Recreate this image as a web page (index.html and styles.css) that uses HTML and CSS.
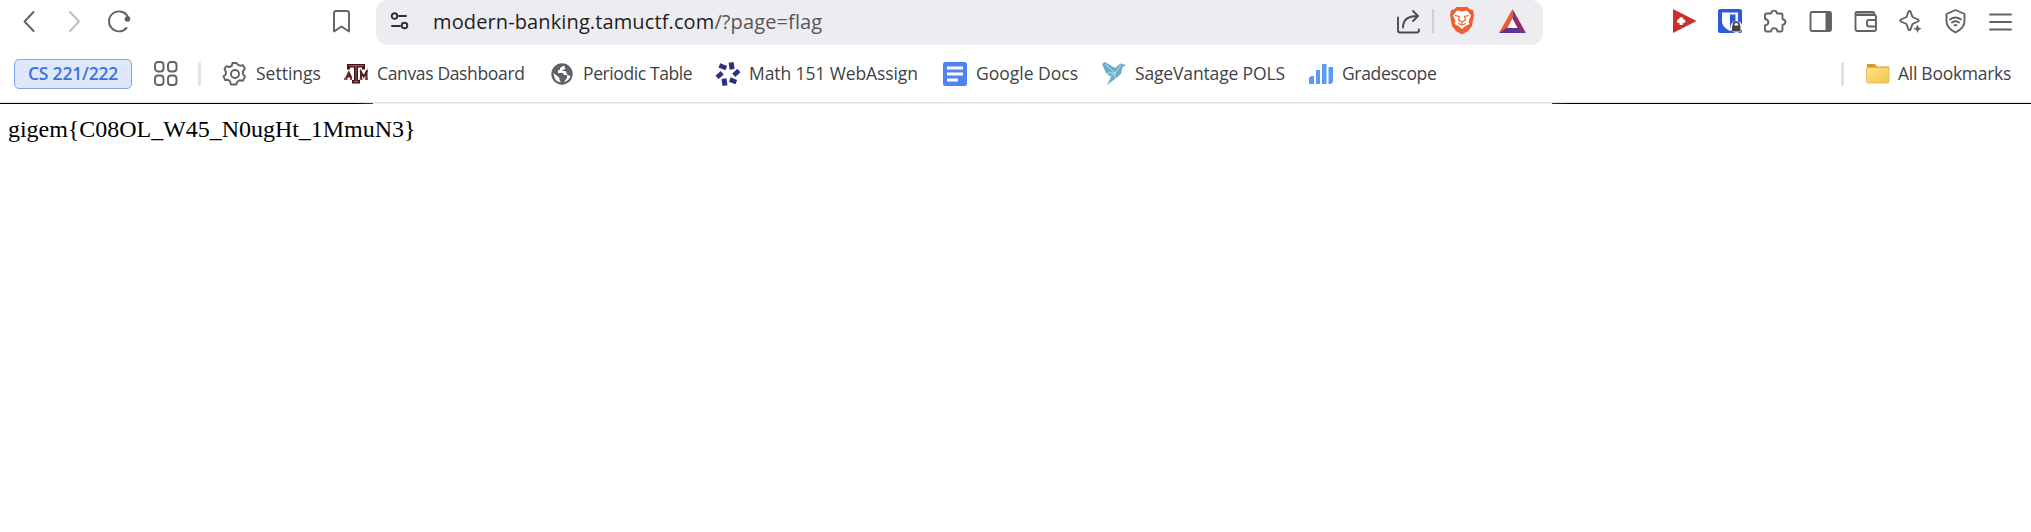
FILE: index.html
```html
<!DOCTYPE html>
<html lang="en">
<head>
<meta charset="utf-8">
<title>modern-banking.tamuctf.com</title>
<link rel="stylesheet" href="styles.css">
</head>
<body>
<header class="browser">
  <div class="toolbar">
    <nav class="nav">
      <svg class="ic back" width="24" height="24" viewBox="0 0 24 24"><path d="M15.500 3 6.500 12.500l9 9.500"/></svg>
      <svg class="ic forward" width="24" height="24" viewBox="0 0 24 24"><path d="M7 3l9 9.500L7 22"/></svg>
      <svg class="ic" width="26" height="26" viewBox="0 0 26 26"><path d="M21 9A10 10 0 1 0 19.500 20"/><circle class="solid" cx="20.500" cy="11" r="2.800"/></svg>
    </nav>
    <svg class="ic save" width="20" height="26" viewBox="0 0 20 26"><path d="M4 3h11a2 2 0 0 1 2 2v18.500L9.500 18.500 2 23.500V5a2 2 0 0 1 2-2z"/></svg>
    <div class="omnibox">
      <svg class="ic tune" width="20" height="20" viewBox="0 0 20 20"><path d="M9 5h7M2 15h8"/><circle cx="4.500" cy="5" r="2.800"/><circle cx="14.500" cy="14.500" r="2.800"/></svg>
      <div class="url"><span class="host">modern-banking.tamuctf.com</span><span class="path">/?page=flag</span></div>
      <svg class="ic share" width="26" height="26" viewBox="0 0 26 26"><path d="M2 8.500v13q0 2 2 2h17q2 0 2-3M7 18.500C7 11 12 7 21.500 7M17 2l5 5-5 5"/></svg>
      <i class="sep"></i>
      <svg class="brave" width="24" height="28" viewBox="0 0 24 28"><path fill="#f1602c" d="M6.500 0h11L20 2.500l3 .5 1 5-2 11-4 5-6 3.500L6 24l-4-5L0 8l1-5 3-.5z"/><path fill="#fff" d="m7 3.500 5 1 5-1 4 5-2.500 5.500 1 3-4 2-3.500 3-3.500-3-4-2 1-3L3 8.500z"/><path fill="none" stroke="#f1602c" stroke-width="1.100" d="m5 8.500 4.500 1-1 3.500 3.500 2 3.500-2-1-3.500 4.500-1M8 16.500l4 1.500 4-1.500M12 15v3"/></svg>
      <svg class="bat" width="27" height="24" viewBox="0 0 27 24"><path fill="#ee5a35" d="M13.500 0 0 24l9-5 4.500-9z"/><path fill="#962b63" d="m13.500 0 13.500 24-9-5-4.500-9z"/><path fill="#63318f" d="M0 24h27l-7.500-5h-12z"/><path fill="#fff" d="m13.500 9.500-5 9.500h10z"/></svg>
    </div>
    <div class="extensions">
      <svg width="25" height="25" viewBox="0 0 25 25"><path fill="#cc2f2a" d="M0 0v24l23.500-12z"/><g fill="#fff"><circle cx="8.200" cy="10" r="2"/><circle cx="6" cy="12.300" r="2"/><circle cx="10.400" cy="12.300" r="2"/><path d="M7.200 11h2l.6 5H6.600z"/></g></svg>
      <svg width="25" height="25" viewBox="0 0 25 25"><rect width="24" height="24" rx="2" fill="#2b5bdb"/><path fill="#fff" d="M4 3.500h16V12c0 5-3 7-8 10-5-3-8-5-8-10z"/><path fill="#2b5bdb" d="M12 5.500h5.500v7q0 3.500-5.500 6.500z"/><circle cx="18.500" cy="18" r="6" fill="#fff"/><path fill="none" stroke="#444" stroke-width="1.700" d="M15.500 18v-2a2.800 2.800 0 0 1 5.600 0v2"/><rect x="14" y="16.500" width="8.500" height="6" rx=".8" fill="#444"/></svg>
      <svg class="ic" width="25" height="25" viewBox="0 0 25 25"><path d="M3.500 4.500H7.500a1 1 0 0 0 1-1C8.500 1 13.500 1 13.500 3.500a1 1 0 0 0 1 1h3.500q1.500 0 1.500 1.500v4q3 1 3 3t-3 3v5q0 1.500-1.500 1.500H14.500c-.5-4.500-6-4.500-6.500 0H3.500Q2 22.500 2 21v-4.500c4.500-1 4.500-5.500 0-6.500V6q0-1.500 1.500-1.500z"/></svg>
      <svg class="ic" width="25" height="25" viewBox="0 0 25 25"><rect x="1.500" y="3" width="20.500" height="19" rx="1.500"/><path class="solid" d="M16.500 3H22v19h-5.500z"/></svg>
      <svg class="ic" width="25" height="25" viewBox="0 0 25 25"><path class="wash" d="M3 3h17v3H3z"/><path d="M1.500 5v15q0 2 2 2H20q2 0 2-2V8q0-2-2-2H3.500q-2 0-2-1.500T3.500 3h15q2 0 2 3M22 11h-7q-2 0-2 2v2.500q0 2 2 2h7"/></svg>
      <svg class="ic" width="25" height="25" viewBox="0 0 25 25"><path d="M9.500 2.500q1-1 2 0l2 5.500 5.500 2.500q1.500 1 0 2L13.500 15l-2 5.500q-1 1-2 0L7.500 15 2 12.500q-1.500-1 0-2L7.500 8z"/><path class="solid thin" d="m18.500 15.500 1.200 3 3 1.200-3 1.200-1.200 3-1.200-3-3-1.200 3-1.200z"/></svg>
      <svg class="ic" width="25" height="25" viewBox="0 0 25 25"><path d="m11.500 1 9 4v7q0 7-9 11.500Q2.500 19 2.500 12V5zM6 10.500q5.500-4 11 0M8 13.500q3.500-2.500 7 0"/><path d="M10.500 16.300q1-.7 2 0"/></svg>
      <svg class="ic" width="25" height="25" viewBox="0 0 25 25"><path d="M1 5.500h21M1 13h21M1 20.500h21"/></svg>
    </div>
  </div>
  <div class="bookmarks">
    <span class="group">CS 221/222</span>
    <svg class="ic apps" width="26" height="26" viewBox="0 0 26 26"><rect x="2" y="1" width="8.500" height="9.500" rx="3"/><rect x="15" y="1" width="8.500" height="9.500" rx="3"/><rect x="2" y="14.500" width="8.500" height="9.500" rx="3"/><rect x="15" y="14.500" width="8.500" height="9.500" rx="3"/></svg>
    <i class="divider"></i>
    <a class="bm settings"><svg class="ic" width="26" height="26" viewBox="0 0 26 26"><path d="m10.500 2-.8 3-2.500 1-3-.8L2.500 8l1.500 3-.5 3-2 1 1.500 4 3-.3 2 1.500 1 3.300h5l1.500-3 2-1.300 3.500.5 2-4-2-2.500v-3l2-2.500-2-3.500-3 .5-2.500-1.200L14.500 2z"/><circle cx="13" cy="13" r="4"/></svg><span>Settings</span></a>
    <a class="bm canvas"><svg width="24" height="20" viewBox="0 0 24 20"><g fill="none" stroke="#5a1f20" stroke-width="2"><path d="m2 14.500 2.800-6 2.800 6M3 12.500h4M17 14.500V8l2.700 4.500L22.500 8v6.500"/><path stroke-width="1.600" d="M0 15h3.500M6 15h3.500M15 15h3.500M21 15h3M15.500 7.500H18M21.500 7.500H24"/></g><path fill="#fff" d="M8 3h7.500v13H8z"/><path fill="#4a0d10" d="M3 0h18v5.500h-3V3.500h-4V16h2v3.500H8V16h2V3.500H6v2H3z"/><path fill="none" stroke="#b79c9d" stroke-width=".7" d="M4.500 1.700h15M12 2v15.500M9.500 17.700h5"/></svg><span>Canvas Dashboard</span></a>
    <a class="bm periodic"><svg width="22" height="22" viewBox="0 0 22 22"><circle cx="11" cy="11" r="10.700" fill="#5f6368"/><path fill="#fff" d="M13 2.500 9 5v2H7v3h5l1 2h3v3l-3 4q5-1 6.500-6l-3-1-2-4h-3V7l3-1zM2.500 10l6 5v2l1.500 2.500Q3 18.500 2.500 10"/></svg><span>Periodic Table</span></a>
    <a class="bm math"><svg width="25" height="24" viewBox="0 0 25 24"><g fill="#2b3180"><rect x="13" y=".5" width="5" height="7" transform="rotate(-8 15 3)"/><rect x="17" y="8.500" width="7" height="4.600" transform="rotate(-42 20.500 11)"/><rect x="13.500" y="16.500" width="7" height="4.600" transform="rotate(22 17 19)"/><rect x="6" y="16.500" width="5" height="7" transform="rotate(-8 9 20)"/><rect x=".2" y="10.500" width="7" height="4.600" transform="rotate(-42 4 13)"/><rect x="3" y="2.500" width="7.500" height="4.600" transform="rotate(22 7 5)"/></g></svg><span>Math 151 WebAssign</span></a>
    <a class="bm docs"><svg width="24" height="24" viewBox="0 0 24 24"><rect width="24" height="24" rx="2.500" fill="#4f83f1"/><path fill="#fff" d="M4 4.500h16v3H4zM4 10.500h16v3H4zM4 16.500h11v3H4z"/></svg><span>Google Docs</span></a>
    <a class="bm sage"><svg width="24" height="23" viewBox="0 0 24 23"><path fill="#68aecb" d="m0 2 4 9 5 4-4 8 8-6 6-5 1.500-7L24 3l-5.500-1.500L13 6 3 0z"/><path fill="none" stroke="#d6eaf1" stroke-width=".8" d="m3 2 10 9 6-8M5 11l8 0v5M8 15l5-4"/></svg><span>SageVantage POLS</span></a>
    <a class="bm grade"><svg width="24" height="22" viewBox="0 0 24 22"><path fill="#5b9bf8" d="M0 21v-6l2-2h3v8zM7 7h4v14H7zM13 1h4.500v20H13zM19.500 4H24v15l-2 2h-2.500z"/></svg><span>Gradescope</span></a>
    <div class="all"><i class="divider"></i><svg width="24" height="20" viewBox="0 0 24 20"><defs><linearGradient id="f" x2="1" y2="1"><stop stop-color="#ffe28a"/><stop offset="1" stop-color="#f3c44b"/></linearGradient></defs><path fill="#d79b2b" d="M1 0h8l2 2.500h12v10H1z"/><rect x=".5" y="3.500" width="22.500" height="15.500" rx="1.500" fill="url(#f)" stroke="#dfae3c" stroke-width=".7"/></svg><span>All Bookmarks</span></div>
  </div>
  <div class="edge"></div>
</header>
<main class="page">gigem{C08OL_W45_N0ugHt_1MmuN3}</main>
</body>
</html>
```
FILE: styles.css
```css
* { box-sizing: border-box; }
body { margin: 0; background: #fff; font-family: "Open Sans", sans-serif; overflow: hidden; }
svg { display: block; flex: none; overflow: visible; }
.ic { fill: none; stroke: #5f6368; stroke-width: 1.900; stroke-linecap: round; stroke-linejoin: round; }
.ic .solid { fill: #5f6368; stroke: none; }
.ic .wash { fill: #aaadb0; stroke: none; }
.toolbar { display: flex; height: 45px; }
.nav { display: flex; width: 332px; padding: 9px 0 0 18px; gap: 21px; }
.nav .ic:last-child { margin: -1px 0 0 -1px; }
.nav .forward { stroke: #bdbfc2; }
.save { margin-top: 8px; }
.omnibox { display: flex; width: 1167px; height: 45px; margin-left: 24px; background: #edecf1; border-radius: 0 0 12px 12px; padding-left: 14px; border-radius: 12px; }
.tune { margin-top: 11px; stroke: #303136; }
.url { width: 986px; padding-left: 23px; font-size: 20px; line-height: 43px; letter-spacing: .12px; white-space: nowrap; color: #55565b; }
.host { color: #1d1d22; }
.share { margin-top: 9px; stroke: #4a4b50; }
.sep { width: 2px; height: 24px; margin: 9px 16px 0 10px; background: #cfcfd4; }
.brave { margin-top: 7px; }
.bat { margin: 9px 0 0 25px; }
.extensions { display: flex; gap: 20.200px; padding: 9px 0 0 130px; }
.bookmarks { display: flex; align-items: center; height: 57px; font-size: 17.500px; color: #414246; }
.bm, .all { display: flex; align-items: center; height: 30px; white-space: nowrap; }
.bm span, .all span { line-height: 26px; margin-top: -1px; }
.group { width: 118px; height: 30px; margin: 1px 21px 0 14px; border: 1.500px solid #80a5ee; border-radius: 5px; background: #dfe8fb; color: #3d70e2; font-weight: 600; line-height: 26px; letter-spacing: -.2px; text-align: center; }
.divider { width: 3px; height: 24px; border-radius: 2px; background: #e2e2e6; }
.apps { margin: 1px 19px 0 0; }
.settings { width: 122px; margin-left: 21px; gap: 8px; }
.canvas { width: 207px; gap: 9px; letter-spacing: -.35px; }
.periodic { width: 165px; gap: 10px; letter-spacing: -.4px; }
.math { width: 227px; gap: 8px; letter-spacing: -.1px; }
.docs { width: 159px; gap: 9px; }
.sage { width: 207px; gap: 9px; letter-spacing: -.15px; }
.grade { gap: 9px; letter-spacing: -.35px; }
.all { width: 190px; margin-left: auto; letter-spacing: -.27px; }
.all svg { margin: 0 8px 0 22px; }
.edge { height: 2px; border-top: 1px solid #e3e3e6; background: linear-gradient(90deg, #000 0 355px, #45379b 373px, #f0f0f2 373px 1552px, #333 1552px, #000 1570px); background-origin: border-box; }
.page { padding: 11px 8px; font: 24px/28px "Liberation Serif", serif; letter-spacing: -.03px; color: #000; }
```
